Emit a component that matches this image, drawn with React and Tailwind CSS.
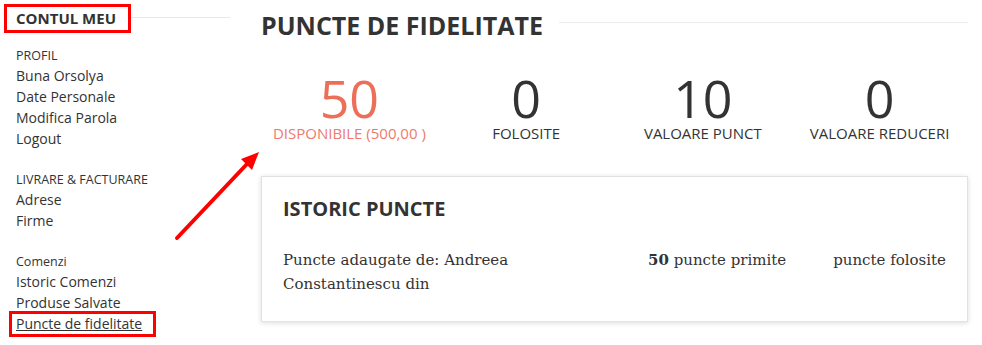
import React from "react";

const stats = [
  { value: "50", label: "DISPONIBILE (500,00 )", accent: true },
  { value: "0", label: "FOLOSITE" },
  { value: "10", label: "VALOARE PUNCT" },
  { value: "0", label: "VALOARE REDUCERI" },
];

const Section = ({ title, items, className = "" }) => (
  <div className={className}>
    <p className="text-[12.5px] leading-[18px] text-[#333]">{title}</p>
    <ul>
      {items.map((item) => (
        <li key={item} className="text-[14px] leading-[21px] text-[#333]">
          {item}
        </li>
      ))}
    </ul>
  </div>
);

export default function App() {
  return (
    <div
      className="relative flex w-[982px] h-[345px] bg-white text-[#333] overflow-hidden"
      style={{ fontFamily: '"Open Sans", "Liberation Sans", sans-serif' }}
    >
      {/* Sidebar */}
      <aside className="w-[230px] shrink-0 pt-[4px] pl-[4px]">
        <div className="flex items-center">
          <div className="h-[29px] flex items-center border-[3px] border-[#ff0000] px-[9px] pr-[12px]">
            <h3 className="text-[15px] font-bold text-[#333]">CONTUL MEU</h3>
          </div>
          <div className="flex-1 h-px bg-[#e8e8e8] mt-[-3px]" />
        </div>

        <div className="pl-[12px]">
          <Section
            className="mt-[14px]"
            title="PROFIL"
            items={["Buna Orsolya", "Date Personale", "Modifica Parola", "Logout"]}
          />
          <Section className="mt-[22px]" title="LIVRARE & FACTURARE" items={["Adrese", "Firme"]} />
          <div className="mt-[22px]">
            <p className="text-[12.5px] leading-[18px] text-[#333]">Comenzi</p>
            <ul>
              <li className="text-[14px] leading-[21px]">Istoric Comenzi</li>
              <li className="text-[14px] leading-[21px]">Produse Salvate</li>
              <li className="text-[14px] leading-[21px]">
                <span className="relative inline-block underline">
                  Puncte de fidelitate
                  <span className="absolute left-[-7px] right-[-14px] top-[-2px] bottom-[-3px] border-[3px] border-[#ff0000]" />
                </span>
              </li>
            </ul>
          </div>
        </div>
      </aside>

      {/* Main */}
      <main className="flex-1 pl-[31px] pr-[14px] pt-[9px]">
        <div className="flex items-center">
          <h1 className="text-[25px] leading-[32px] font-bold text-[#333]">PUNCTE DE FIDELITATE</h1>
          <div className="flex-1 h-px bg-[#ececec] ml-[16px] mt-[-6px]" />
        </div>

        <div className="grid grid-cols-4 mt-[33px]">
          {stats.map((s) => (
            <div key={s.label} className="flex flex-col items-center">
              <span
                className={`text-[52px] leading-[48px] font-normal ${s.accent ? "text-[#ec6f5a]" : "text-[#333]"}`}
              >
                {s.value}
              </span>
              <span
                className={`mt-[1px] text-[15px] leading-[20px] ${s.accent ? "text-[#ee7a6c]" : "text-[#333]"}`}
              >
                {s.label}
              </span>
            </div>
          ))}
        </div>

        <section className="mt-[33px] border border-[#e2e2e2] shadow-[0_1px_5px_rgba(0,0,0,0.14)] px-[21px] pt-[20px] pb-[25px]">
          <h2 className="text-[20px] leading-[24px] font-bold text-[#333]">ISTORIC PUNCTE</h2>
          <div
            className="flex mt-[27px] text-[15px] leading-[24px] text-[#333]"
            style={{ fontFamily: '"DejaVu Serif", "Liberation Serif", serif' }}
          >
            <div className="w-[250px]">Puncte adaugate de: Andreea Constantinescu din</div>
            <div className="ml-[115px]">
              <b>50</b> puncte primite
            </div>
            <div className="ml-auto">puncte folosite</div>
          </div>
        </section>
      </main>

      {/* annotation arrow */}
      <svg className="absolute left-0 top-0 pointer-events-none" width="982" height="345">
        <line x1="177" y1="238" x2="247" y2="164" stroke="#ff0000" strokeWidth="4" strokeLinecap="round" />
        <polygon points="259,152 241,159 252,170" fill="#ff0000" />
      </svg>
    </div>
  );
}
